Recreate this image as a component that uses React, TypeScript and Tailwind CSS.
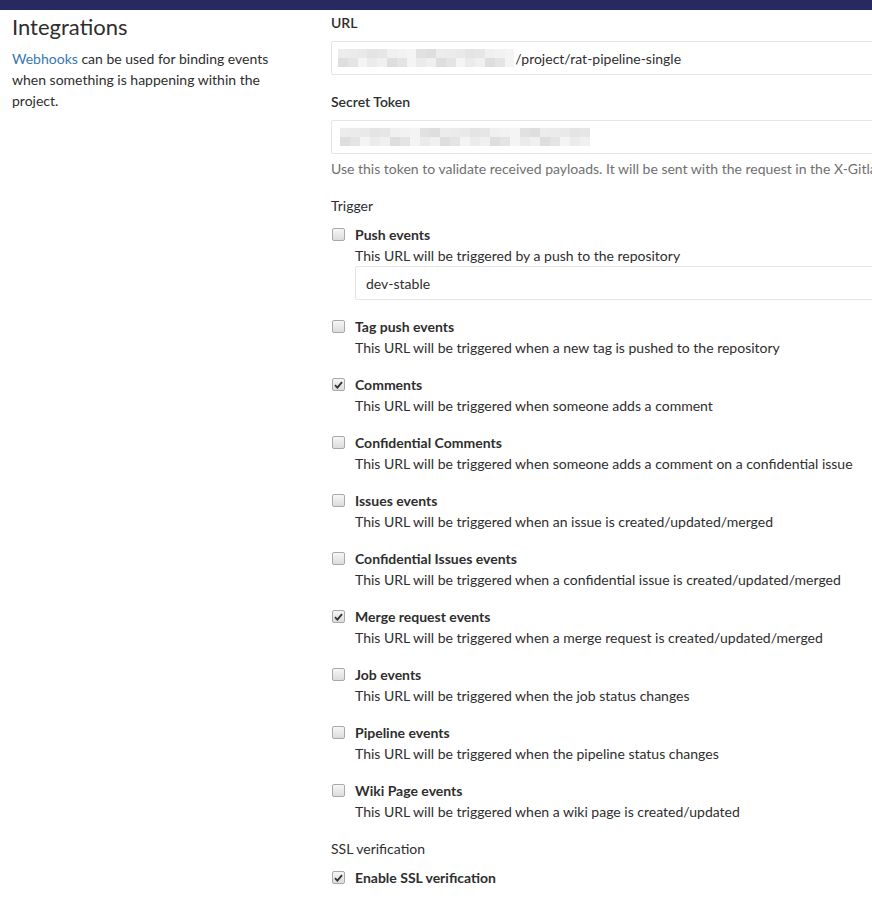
import React from 'react';

interface Trigger {
  title: string;
  desc: string;
  checked?: boolean;
  branch?: string;
}

const triggers: Trigger[] = [
  { title: 'Push events', desc: 'This URL will be triggered by a push to the repository', branch: 'dev-stable' },
  { title: 'Tag push events', desc: 'This URL will be triggered when a new tag is pushed to the repository' },
  { title: 'Comments', desc: 'This URL will be triggered when someone adds a comment', checked: true },
  { title: 'Confidential Comments', desc: 'This URL will be triggered when someone adds a comment on a confidential issue' },
  { title: 'Issues events', desc: 'This URL will be triggered when an issue is created/updated/merged' },
  { title: 'Confidential Issues events', desc: 'This URL will be triggered when a confidential issue is created/updated/merged' },
  { title: 'Merge request events', desc: 'This URL will be triggered when a merge request is created/updated/merged', checked: true },
  { title: 'Job events', desc: 'This URL will be triggered when the job status changes' },
  { title: 'Pipeline events', desc: 'This URL will be triggered when the pipeline status changes' },
  { title: 'Wiki Page events', desc: 'This URL will be triggered when a wiki page is created/updated' },
];

const greys = ['#ececec', '#e4e4e4', '#f2f2f2', '#dedede', '#e9e9e9', '#f0f0f0', '#e1e1e1', '#ebebeb', '#e6e6e6', '#f4f4f4'];

// pixelated blur standing in for the hidden host / token
const Blur = ({ cols, cell }: { cols: number; cell: number }) => (
  <div className="flex flex-col">
    {[0, 1].map((r) => (
      <div key={r} className="flex">
        {Array.from({ length: cols }).map((_, c) => (
          <span
            key={c}
            className="block h-[9px]"
            style={{ width: cell, backgroundColor: greys[(c * 7 + r * 3 + c * r) % greys.length] }}
          />
        ))}
      </div>
    ))}
  </div>
);

const Checkbox = ({ checked }: { checked?: boolean }) => (
  <span className="mt-[4px] flex h-[13px] w-[13px] shrink-0 items-center justify-center rounded-[2px] border border-[#a9a9a9] bg-gradient-to-b from-[#f6f6f6] to-[#dcdcdc]">
    {checked && (
      <svg width="9" height="8" viewBox="0 0 9 8">
        <path d="M1 4.2 L3.4 6.6 L8 1.2" fill="none" stroke="#333" strokeWidth="1.8" />
      </svg>
    )}
  </span>
);

const App: React.FC = () => {
  return (
    <div className="w-[872px] h-[898px] overflow-hidden bg-white text-[#2e2e2e] text-[14px] leading-[21px] font-['Lato',sans-serif]">
      <div className="h-[10px] bg-[#292961]"></div>
      <div className="flex">
        <div className="w-[319px] shrink-0 pl-[12px] pr-[16px]">
          <h4 className="mt-[2px] mb-[6px] text-[22px] leading-[30px] text-[#2e2e2e]">Integrations</h4>
          <p className="w-[270px]">
            <a className="text-[#3777b0]">Webhooks</a> can be used for binding events when something is happening within the project.
          </p>
        </div>
        <div className="w-[760px] shrink-0 pl-[12px]">
          <label className="mt-[2px] block font-semibold">URL</label>
          <div className="mt-[8px] flex h-[34px] items-center border border-[#e5e5e5] rounded-[2px] pl-[6px]">
            <Blur cols={18} cell={9.8} />
            <span className="ml-[1px]">/project/rat-pipeline-single</span>
          </div>
          <label className="mt-[16px] block font-semibold">Secret Token</label>
          <div className="mt-[8px] flex h-[34px] items-center border border-[#e5e5e5] rounded-[2px] pl-[8px]">
            <Blur cols={25} cell={10} />
          </div>
          <p className="mt-[4px] whitespace-nowrap text-[#707070]">
            Use this token to validate received payloads. It will be sent with the request in the X-Gitlab-Token HTTP header.
          </p>
          <div className="mt-[16px]">Trigger</div>
          <ul className="mt-[8px] flex flex-col gap-[16px]">
            {triggers.map((t) => (
              <li key={t.title} className="flex gap-[10px] pl-[1px]">
                <Checkbox checked={t.checked} />
                <div className="flex-1">
                  <div className="font-bold">{t.title}</div>
                  <div>{t.desc}</div>
                  {t.branch && (
                    <div className="mt-[-11px] flex h-[34px] items-center border border-[#e5e5e5] rounded-[2px] px-[10px] translate-y-[11px] mb-[11px]">
                      {t.branch}
                    </div>
                  )}
                </div>
              </li>
            ))}
          </ul>
          <div className="mt-[16px]">SSL verification</div>
          <div className="mt-[8px] flex gap-[10px] pl-[1px]">
            <Checkbox checked />
            <span className="font-bold">Enable SSL verification</span>
          </div>
        </div>
      </div>
    </div>
  );
};

export default App;
